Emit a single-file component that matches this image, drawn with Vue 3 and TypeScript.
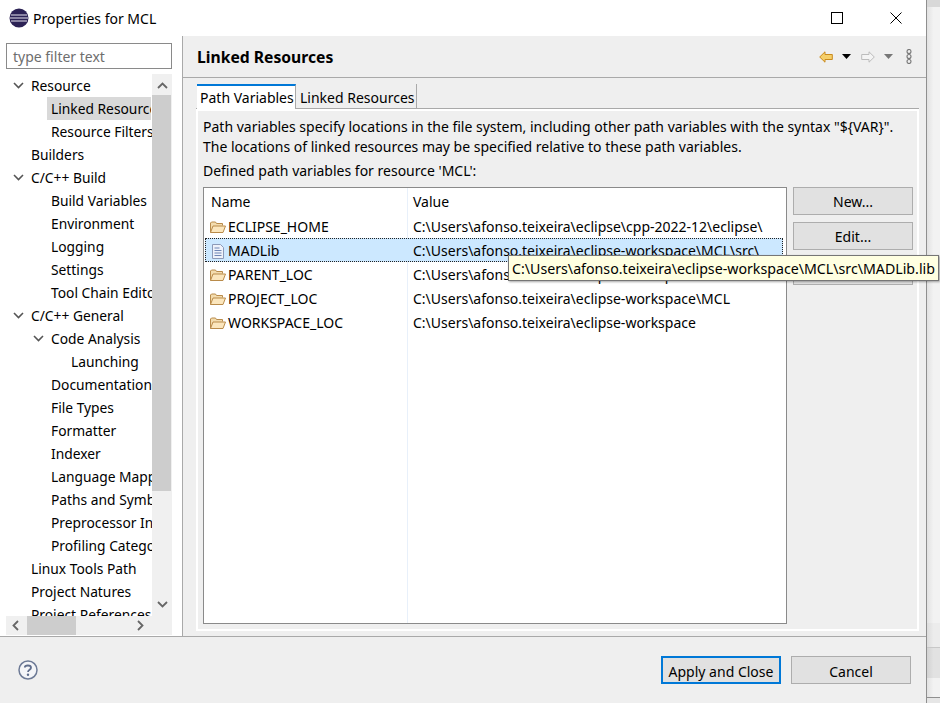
<script setup lang="ts">
interface TreeNode {
  label: string
  indent: number
  open?: boolean
  selected?: boolean
}

const tree: TreeNode[] = [
  { label: 'Resource', indent: 0, open: true },
  { label: 'Linked Resources', indent: 1, selected: true },
  { label: 'Resource Filters', indent: 1 },
  { label: 'Builders', indent: 0 },
  { label: 'C/C++ Build', indent: 0, open: true },
  { label: 'Build Variables', indent: 1 },
  { label: 'Environment', indent: 1 },
  { label: 'Logging', indent: 1 },
  { label: 'Settings', indent: 1 },
  { label: 'Tool Chain Editor', indent: 1 },
  { label: 'C/C++ General', indent: 0, open: true },
  { label: 'Code Analysis', indent: 1, open: true },
  { label: 'Launching', indent: 2 },
  { label: 'Documentation', indent: 1 },
  { label: 'File Types', indent: 1 },
  { label: 'Formatter', indent: 1 },
  { label: 'Indexer', indent: 1 },
  { label: 'Language Mappings', indent: 1 },
  { label: 'Paths and Symbols', indent: 1 },
  { label: 'Preprocessor Include', indent: 1 },
  { label: 'Profiling Categories', indent: 1 },
  { label: 'Linux Tools Path', indent: 0 },
  { label: 'Project Natures', indent: 0 },
  { label: 'Project References', indent: 0 },
]

const rows = [
  { name: 'ECLIPSE_HOME', value: 'C:\\Users\\afonso.teixeira\\eclipse\\cpp-2022-12\\eclipse\\', icon: 'folder' },
  { name: 'MADLib', value: 'C:\\Users\\afonso.teixeira\\eclipse-workspace\\MCL\\src\\', icon: 'file', selected: true },
  { name: 'PARENT_LOC', value: 'C:\\Users\\afonso.teixeira\\eclipse-workspace', icon: 'folder' },
  { name: 'PROJECT_LOC', value: 'C:\\Users\\afonso.teixeira\\eclipse-workspace\\MCL', icon: 'folder' },
  { name: 'WORKSPACE_LOC', value: 'C:\\Users\\afonso.teixeira\\eclipse-workspace', icon: 'folder' },
]
</script>

<template>
  <div class="screen">
    <div class="dialog">
      <header class="titlebar">
        <svg class="logo" width="20" height="20" viewBox="0 0 20 20">
          <circle cx="10" cy="10" r="9.5" fill="#2c2255" />
          <path d="M2 7h16M1 10h18M2 13h16" stroke="#e8e6f2" stroke-width="1.2" />
        </svg>
        <span class="title">Properties for MCL</span>
        <div class="winbtns">
          <svg width="12" height="12" viewBox="0 0 12 12"><rect x="0.5" y="0.5" width="11" height="11" fill="none" stroke="#000" /></svg>
          <svg width="12" height="12" viewBox="0 0 12 12"><path d="M0.5 0.5l11 11M11.5 0.5l-11 11" stroke="#000" /></svg>
        </div>
      </header>

      <div class="body">
        <aside class="side">
          <div class="filter">type filter text</div>
          <div class="treewrap">
            <div class="tree">
              <div
                v-for="n in tree"
                :key="n.label"
                class="node"
                :class="['lvl' + n.indent]"
              >
                <svg v-if="n.open" class="twist" width="11" height="7" viewBox="0 0 11 7">
                  <path d="M1 1l4.5 4.5L10 1" fill="none" stroke="#555" stroke-width="1.6" />
                </svg>
                <span class="nlabel" :class="{ sel: n.selected }">{{ n.label }}</span>
              </div>
            </div>
            <div class="vscroll">
              <svg width="11" height="7" viewBox="0 0 11 7"><path d="M1 6l4.500-4.500L10 6" fill="none" stroke="#666" stroke-width="1.800" /></svg>
              <div class="vthumb"></div>
              <svg class="vdown" width="11" height="7" viewBox="0 0 11 7"><path d="M1 1l4.500 4.500L10 1" fill="none" stroke="#666" stroke-width="1.800" /></svg>
            </div>
            <div class="hscroll">
              <svg width="7" height="11" viewBox="0 0 7 11"><path d="M6 1L1.500 5.500 6 10" fill="none" stroke="#666" stroke-width="1.800" /></svg>
              <div class="hthumb"></div>
              <svg width="7" height="11" viewBox="0 0 7 11"><path d="M1 1l4.500 4.500L1 10" fill="none" stroke="#666" stroke-width="1.800" /></svg>
            </div>
          </div>
        </aside>

        <main class="main">
          <div class="head">
            <h1>Linked Resources</h1>
            <div class="tools">
              <svg width="14" height="12" viewBox="0 0 14 12"><path d="M0.700 6L6 0.800V3.500h7.300v5H6v2.700z" fill="#f5cf6a" stroke="#c98a1e" /></svg>
              <svg class="drop" width="9" height="5" viewBox="0 0 9 5"><path d="M0 0h9L4.500 5z" fill="#000" /></svg>
              <svg class="fwd" width="14" height="12" viewBox="0 0 14 12"><path d="M13.300 6L8 0.800V3.500H0.700v5H8v2.700z" fill="#f4f4f4" stroke="#bcbcbc" /></svg>
              <svg class="drop" width="9" height="5" viewBox="0 0 9 5"><path d="M0 0h9L4.500 5z" fill="#777" /></svg>
              <svg class="dots" width="6" height="15" viewBox="0 0 6 15"><g fill="none" stroke="#777" stroke-width="1.100"><circle cx="3" cy="2.500" r="2" /><circle cx="3" cy="7.500" r="2" /><circle cx="3" cy="12.500" r="2" /></g></svg>
            </div>
          </div>

          <div class="tabpane">
            <div class="tabs">
              <div class="tab active">Path Variables</div>
              <div class="tab second">Linked Resources</div>
            </div>
            <div class="panel">
              <p class="desc">Path variables specify locations in the file system, including other path variables with the syntax "${VAR}".<br />The locations of linked resources may be specified relative to these path variables.</p>
              <p class="defined">Defined path variables for resource 'MCL':</p>
              <div class="content">
                <div class="table">
                  <div class="thead">
                    <div class="cname">Name</div>
                    <div class="cvalue">Value</div>
                  </div>
                  <div
                    v-for="r in rows"
                    :key="r.name"
                    class="row"
                    :class="{ rowsel: r.selected }"
                  >
                    <div class="cname cell">
                      <svg v-if="r.icon === 'folder'" width="16" height="13" viewBox="0 0 16 13">
                        <path d="M0.500 11.500V2l1-1h4l1 1.500h6v2" fill="#f3dcae" stroke="#b98b4a" />
                        <path d="M0.500 11.500L3 5h12.500l-2.500 6.500z" fill="#fbe6bd" stroke="#b98b4a" />
                      </svg>
                      <svg v-else width="16" height="15" viewBox="0 0 16 15">
                        <path d="M2.500 0.500h8l3 3v11h-11z" fill="#eef2fa" stroke="#8c9ab8" />
                        <path d="M4.500 4h5M4.500 6.500h7M4.500 9h7M4.500 11.500h7" stroke="#6f86b6" />
                      </svg>
                      <span>{{ r.name }}</span>
                    </div>
                    <div class="cvalue cell">{{ r.value }}</div>
                  </div>
                </div>
                <div class="buttons">
                  <button class="btn">New...</button>
                  <button class="btn">Edit...</button>
                  <button class="btn">Remove</button>
                </div>
              </div>
            </div>
          </div>
        </main>
      </div>

      <footer class="footer">
        <svg class="help" width="20" height="20" viewBox="0 0 20 20">
          <circle cx="10" cy="10" r="9" fill="#f4f5f8" stroke="#6d7a96" stroke-width="1.500" />
          <path d="M6.800 7.500C7 4.800 13 4.800 13 7.800c0 2-3 2-3 4.200" fill="none" stroke="#5f6d8c" stroke-width="1.800" />
          <circle cx="10" cy="14.800" r="1.200" fill="#5f6d8c" />
        </svg>
        <button class="btn fbtn primary">Apply and Close</button>
        <button class="btn fbtn">Cancel</button>
      </footer>
    </div>
    <div class="backdrop">
      <div class="bd-top"></div>
      <div class="bd-mid"></div>
      <div class="bd-low"></div>
      <div class="bd-band"></div>
      <div class="bd-end"></div>
      <div class="bd-tail"></div>
    </div>
    <div class="tooltip">C:\Users\afonso.teixeira\eclipse-workspace\MCL\src\MADLib.lib</div>
  </div>
</template>

<style>
html, body { margin: 0; background: #f0f0f0; }
</style>

<style scoped>
.screen {
  position: relative;
  width: 940px;
  height: 703px;
  overflow: hidden;
  display: flex;
  background: #f1f1f1;
  font-family: "Noto Sans", "Open Sans", sans-serif;
  font-size: 14px;
  color: #000;
}
.dialog {
  width: 927px;
  height: 703px;
  flex: none;
  box-sizing: border-box;
  border-right: 1px solid #8f8f8f;
  background: #efefef;
  display: flex;
  flex-direction: column;
}
.backdrop {
  flex: 1;
  display: flex;
  flex-direction: column;
}
.bd-top { height: 7px; background: #d8d8d8; }
.bd-mid { flex: 1; background: linear-gradient(90deg, #e2e2e2, #f2f2f2 50%); }
.bd-low { height: 25px; box-sizing: border-box; background: linear-gradient(90deg, #dcdcdc, #ececec 50%); border-bottom: 1px solid #c8c8c8; }
.bd-band { height: 30px; background: linear-gradient(90deg, #d2d2d2, #e2e2e2 50%); }
.bd-end { height: 19px; background: linear-gradient(90deg, #e2e2e2, #f2f2f2 50%); }
.bd-tail { height: 6px; box-sizing: border-box; border-top: 1px solid #8f8f8f; background: #e6e6e6; }
.titlebar {
  height: 36px;
  flex: none;
  background: #fff;
  display: flex;
  align-items: center;
  padding-left: 9px;
}
.logo { margin-right: 4px; }
.title { font-size: 14px; }
.winbtns {
  margin-left: auto;
  display: flex;
  align-items: center;
  gap: 47px;
  padding-right: 24px;
}
.body {
  flex: 1;
  min-height: 0;
  display: flex;
  border-bottom: 1px solid #a9a9a9;
}
.side {
  width: 183px;
  flex: none;
  background: #fff;
  border-right: 1px solid #a9a9a9;
  padding: 7px 10px 0 6px;
  box-sizing: border-box;
}
.filter {
  height: 26px;
  box-sizing: border-box;
  border: 1px solid #8a8a8a;
  color: #6e6e6e;
  line-height: 26px;
  padding-left: 6px;
}
.treewrap {
  display: grid;
  grid-template-columns: 146px 20px;
  grid-template-rows: 542px 19px;
  margin-top: 5px;
}
.tree { overflow: hidden; font-size: 13.8px; }
.node {
  position: relative;
  height: 23px;
  line-height: 23px;
  white-space: nowrap;
}
.lvl0 { padding-left: 21px; }
.lvl1 { padding-left: 41px; }
.lvl2 { padding-left: 61px; }
.nlabel { display: inline-block; padding: 0 4px; }
.sel {
  background: #d9d9d9;
  width: 104px;
  box-sizing: border-box;
  overflow: hidden;
  vertical-align: top;
}
.twist { position: absolute; top: 8px; left: 7px; }
.lvl1 .twist { left: 27px; }
.vscroll {
  background: #f0f0f0;
  display: flex;
  flex-direction: column;
  align-items: center;
  padding: 8px 0;
}
.vthumb {
  width: 19px;
  height: 396px;
  background: #cdcdcd;
  margin-top: 6px;
  align-self: flex-start;
}
.vdown { margin-top: auto; }
.hscroll {
  grid-column: 1 / 3;
  background: #f0f0f0;
  display: flex;
  align-items: center;
  padding-left: 6px;
}
.hthumb {
  width: 49px;
  height: 19px;
  background: #cdcdcd;
  margin: 0 61px 0 8px;
}
.main {
  flex: 1;
  min-width: 0;
  display: flex;
  flex-direction: column;
  background: #efefef;
}
.head {
  height: 42px;
  flex: none;
  box-sizing: border-box;
  display: flex;
  align-items: center;
  padding: 0 14px;
  border-bottom: 1px solid #a9a9a9;
}
h1 { margin: 0; font-size: 15.7px; font-weight: 700; }
.tools {
  margin-left: auto;
  display: flex;
  align-items: center;
}
.drop { margin-left: 9px; }
.fwd { margin-left: 10px; }
.dots { margin-left: 13px; }
.tabpane {
  flex: 1;
  min-height: 0;
  padding: 6px 7px 5px 13px;
  display: flex;
  flex-direction: column;
}
.tabs {
  display: flex;
  height: 25px;
  flex: none;
  box-sizing: border-box;
  padding-left: 1px;
  border-bottom: 1px solid #a9a9a9;
}
.tab {
  height: 24px;
  box-sizing: border-box;
  line-height: 28px;
  overflow: hidden;
  white-space: nowrap;
  border-right: 1px solid #a9a9a9;
}
.tab.active {
  width: 99px;
  height: 25px;
  padding-left: 3px;
  background: #fff;
  border-top: 2px solid #0078d7;
  line-height: 24px;
  position: relative;
}
.tab.second {
  width: 121px;
  padding-left: 4px;
}
.panel {
  flex: 1;
  min-height: 0;
  border: 2px solid #fff;
  background: #efefef;
  padding: 6px 4px 5px 5px;
  display: flex;
  flex-direction: column;
}
.desc { margin: 0; line-height: 20px; white-space: nowrap; }
.defined { margin: 4px 0 0; line-height: 20px; }
.content { flex: 1; min-height: 0; display: flex; margin-top: 6px; }
.table {
  width: 584px;
  flex: none;
  box-sizing: border-box;
  border: 1px solid #8a8a8a;
  background: #fff;
  background-image: linear-gradient(#e8f0fa, #e8f0fa);
  background-repeat: no-repeat;
  background-size: 1px 100%;
  background-position: 203px 0;
}
.thead { display: flex; height: 27px; line-height: 27px; }
.cname { width: 203px; flex: none; padding-left: 7px; box-sizing: border-box; }
.cvalue { padding-left: 6px; white-space: nowrap; }
.row { display: flex; height: 24px; line-height: 24px; box-sizing: border-box; }
.cell { display: flex; align-items: center; gap: 2px; }
.row .cname { padding-left: 6px; }
.rowsel {
  background: #cce8ff;
  outline: 1px dotted #222;
  outline-offset: -1px;
  margin: -1px 3px 1px 1px;
  padding-top: 2px;
}
.row.rowsel .cname { width: 202px; padding-left: 5px; }
.buttons {
  display: flex;
  flex-direction: column;
  gap: 7px;
  margin-left: 6px;
}
.btn {
  width: 120px;
  height: 28px;
  box-sizing: border-box;
  padding: 0;
  background: #e1e1e1;
  border: 1px solid #adadad;
  font: inherit;
  color: #000;
}
.footer {
  height: 66px;
  flex: none;
  display: flex;
  align-items: center;
  padding: 0 15px 0 18px;
  background: #efefef;
}
.help { margin-right: auto; }
.fbtn { margin-left: 10px; padding-top: 2px; }
.primary { border: 2px solid #0078d7; }
.tooltip {
  position: absolute;
  left: 508px;
  top: 255px;
  height: 26px;
  box-sizing: border-box;
  padding: 0 3px;
  line-height: 25px;
  font-size: 14.2px;
  background: #ffffe1;
  border: 1px solid #767676;
  box-shadow: 1px 1px 2px rgba(0, 0, 0, 0.35);
  white-space: nowrap;
}
</style>
